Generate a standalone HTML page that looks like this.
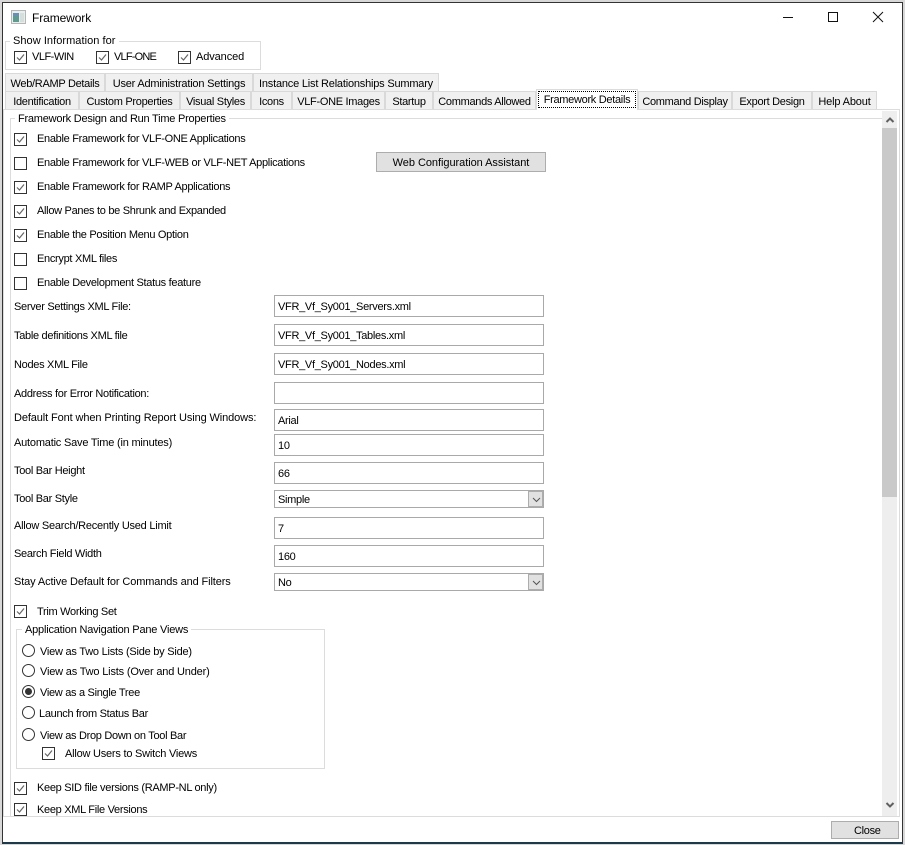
<!DOCTYPE html>
<html><head><meta charset="utf-8"><style>
*{box-sizing:border-box}
html,body{margin:0;padding:0}
body{width:905px;height:845px;position:relative;overflow:hidden;background:#d8d8d8;font:11px/14px "Liberation Sans",sans-serif;letter-spacing:-.3px;color:#000}
div,span,svg{position:absolute}
.t{white-space:nowrap;margin-top:1px}
.win{left:2px;top:2px;width:901px;height:842px;background:#fff;border:1px solid #333;border-bottom:2px solid #1c3a4a}
.tab{background:#f0f0f0;border:1px solid #d9d9d9;height:19px;text-align:center;white-space:nowrap;padding-top:3px}
.in{left:274px;width:270px;height:22px;border:1px solid #a9a9a9;background:#fff;padding:4px 0 0 3px;white-space:nowrap}
.cb{left:274px;width:270px;height:18px;border:1px solid #a9a9a9;background:#fff;padding:2px 0 0 3px;white-space:nowrap}
.arr{right:0;top:0;width:15px;height:16px;background:#e1e1e1;border:1px solid #adadad}
.line{background:#dcdcdc}
</style></head><body>
<div class="win"></div>
<svg style="left:11px;top:10px" width="16" height="15"><rect x=".5" y=".5" width="14" height="13" fill="#e8eeee" stroke="#b5b5b5"/><rect x="2" y="3" width="6" height="9" fill="#5f9a90"/><rect x="2" y="3" width="6" height="3" fill="#6a8fb0"/><rect x="9" y="3" width="4" height="9" fill="#d5dedc"/></svg>
<div class="t" style="left:32px;top:10px;font-size:12px;letter-spacing:-.1px">Framework</div>
<svg style="left:780px;top:10px" width="110" height="16" fill="none" stroke="#111"><path d="M3 7.5H13"/><rect x="48.5" y="2.5" width="9" height="9"/><path d="M93 2L103 12M103 2L93 12"/></svg>

<div style="left:5px;top:41px;width:256px;height:29px;border:1px solid #dcdcdc"></div>
<div class="t" style="left:10px;top:33px;background:#fff;padding:0 3px;letter-spacing:.05px">Show Information for</div>
<svg style="left:14px;top:51px" width="14" height="14"><use href="#ck"/></svg><div class="t" style="left:32px;top:49px;letter-spacing:-.5px">VLF-WIN</div>
<svg style="left:96px;top:51px" width="14" height="14"><use href="#ck"/></svg><div class="t" style="left:114px;top:49px;letter-spacing:-.8px">VLF-ONE</div>
<svg style="left:178px;top:51px" width="14" height="14"><use href="#ck"/></svg><div class="t" style="left:196px;top:49px;letter-spacing:-.1px">Advanced</div>

<svg width="0" height="0" style="left:0;top:0"><defs><g id="ck"><rect x=".5" y=".5" width="12" height="12" fill="#fff" stroke="#333"/><path d="M3 6.5L5.5 9L10 3.5" fill="none" stroke="#666" stroke-width="1.2"/></g><g id="un"><rect x=".5" y=".5" width="12" height="12" fill="#fff" stroke="#333"/></g><g id="ro"><circle cx="6.5" cy="6.5" r="6" fill="#fff" stroke="#333"/></g></defs></svg>

<div class="tab" style="left:5px;top:73px;width:100px">Web/RAMP Details</div>
<div class="tab" style="left:105px;top:73px;width:148px;letter-spacing:-.2px">User Administration Settings</div>
<div class="tab" style="left:253px;top:73px;width:186px;letter-spacing:-.2px">Instance List Relationships Summary</div>
<div class="tab" style="left:5px;top:91px;width:74px">Identification</div>
<div class="tab" style="left:79px;top:91px;width:101px">Custom Properties</div>
<div class="tab" style="left:180px;top:91px;width:71px">Visual Styles</div>
<div class="tab" style="left:251px;top:91px;width:41px">Icons</div>
<div class="tab" style="left:292px;top:91px;width:93px">VLF-ONE Images</div>
<div class="tab" style="left:385px;top:91px;width:48px">Startup</div>
<div class="tab" style="left:433px;top:91px;width:103px">Commands Allowed</div>
<div class="tab" style="left:638px;top:91px;width:94px">Command Display</div>
<div class="tab" style="left:732px;top:91px;width:80px">Export Design</div>
<div class="tab" style="left:812px;top:91px;width:65px;letter-spacing:-.15px">Help About</div>

<div style="left:3px;top:109px;width:897px;height:708px;border:1px solid #dcdcdc;background:#fff"></div>
<div style="left:536px;top:89px;width:102px;height:21px;background:#fff;border:1px solid #dcdcdc;border-bottom:0"></div>
<div style="left:538px;top:91px;width:98px;height:17px;border:1px dotted #000;text-align:center;padding-top:1px;white-space:nowrap">Framework Details</div>

<div class="line" style="left:10px;top:118px;width:872px;height:1px"></div>
<div class="line" style="left:10px;top:118px;width:1px;height:698px"></div>
<div class="t" style="left:15px;top:111px;background:#fff;padding:0 3px;letter-spacing:-.23px">Framework Design and Run Time Properties</div>

<svg style="left:14px;top:133px" width="14" height="14"><use href="#ck"/></svg><div class="t" style="left:37px;top:131px">Enable Framework for VLF-ONE Applications</div>
<svg style="left:14px;top:157px" width="14" height="14"><use href="#un"/></svg><div class="t" style="left:37px;top:155px">Enable Framework for VLF-WEB or VLF-NET Applications</div>
<svg style="left:14px;top:181px" width="14" height="14"><use href="#ck"/></svg><div class="t" style="left:37px;top:179px">Enable Framework for RAMP Applications</div>
<svg style="left:14px;top:205px" width="14" height="14"><use href="#ck"/></svg><div class="t" style="left:37px;top:203px">Allow Panes to be Shrunk and Expanded</div>
<svg style="left:14px;top:229px" width="14" height="14"><use href="#ck"/></svg><div class="t" style="left:37px;top:227px">Enable the Position Menu Option</div>
<svg style="left:14px;top:253px" width="14" height="14"><use href="#un"/></svg><div class="t" style="left:37px;top:251px">Encrypt XML files</div>
<svg style="left:14px;top:277px" width="14" height="14"><use href="#un"/></svg><div class="t" style="left:37px;top:275px">Enable Development Status feature</div>

<div style="left:376px;top:152px;width:170px;height:20px;background:#e1e1e1;border:1px solid #adadad;text-align:center;padding-top:3px;letter-spacing:-.05px">Web Configuration Assistant</div>

<div class="t" style="left:14px;top:299px">Server Settings XML File:</div><div class="in" style="top:295px">VFR_Vf_Sy001_Servers.xml</div>
<div class="t" style="left:14px;top:328px">Table definitions XML file</div><div class="in" style="top:324px">VFR_Vf_Sy001_Tables.xml</div>
<div class="t" style="left:14px;top:357px">Nodes XML File</div><div class="in" style="top:353px">VFR_Vf_Sy001_Nodes.xml</div>
<div class="t" style="left:14px;top:386px">Address for Error Notification:</div><div class="in" style="top:382px"></div>
<div class="t" style="left:14px;top:410px;letter-spacing:-.11px">Default Font when Printing Report Using Windows:</div><div class="in" style="top:409px">Arial</div>
<div class="t" style="left:14px;top:435px;letter-spacing:-.2px">Automatic Save Time (in minutes)</div><div class="in" style="top:434px">10</div>
<div class="t" style="left:14px;top:463px">Tool Bar Height</div><div class="in" style="top:462px">66</div>
<div class="t" style="left:14px;top:491px">Tool Bar Style</div><div class="cb" style="top:490px">Simple<div class="arr"><svg style="left:3px;top:5px" width="9" height="6" fill="none" stroke="#555"><path d="M1 1L4.500 4.500L8 1"/></svg></div></div>
<div class="t" style="left:14px;top:518px;letter-spacing:-.24px">Allow Search/Recently Used Limit</div><div class="in" style="top:517px">7</div>
<div class="t" style="left:14px;top:546px">Search Field Width</div><div class="in" style="top:545px">160</div>
<div class="t" style="left:14px;top:574px;letter-spacing:-.12px">Stay Active Default for Commands and Filters</div><div class="cb" style="top:573px">No<div class="arr"><svg style="left:3px;top:5px" width="9" height="6" fill="none" stroke="#555"><path d="M1 1L4.500 4.500L8 1"/></svg></div></div>

<svg style="left:14px;top:605px" width="14" height="14"><use href="#ck"/></svg><div class="t" style="left:37px;top:604px">Trim Working Set</div>

<div style="left:16px;top:629px;width:309px;height:140px;border:1px solid #dcdcdc"></div>
<div class="t" style="left:22px;top:622px;background:#fff;padding:0 3px;letter-spacing:-.2px">Application Navigation Pane Views</div>
<svg style="left:22px;top:644px" width="14" height="14"><use href="#ro"/></svg><div class="t" style="left:40px;top:644px;letter-spacing:-.23px">View as Two Lists (Side by Side)</div>
<svg style="left:22px;top:664px" width="14" height="14"><use href="#ro"/></svg><div class="t" style="left:40px;top:664px;letter-spacing:-.18px">View as Two Lists (Over and Under)</div>
<svg style="left:22px;top:685px" width="14" height="14"><use href="#ro"/><circle cx="6.500" cy="6.500" r="3.500" fill="#333"/></svg><div class="t" style="left:40px;top:685px">View as a Single Tree</div>
<svg style="left:22px;top:706px" width="14" height="14"><use href="#ro"/></svg><div class="t" style="left:39px;top:706px">Launch from Status Bar</div>
<svg style="left:22px;top:728px" width="14" height="14"><use href="#ro"/></svg><div class="t" style="left:40px;top:728px">View as Drop Down on Tool Bar</div>
<svg style="left:42px;top:747px" width="14" height="14"><use href="#ck"/></svg><div class="t" style="left:65px;top:746px;letter-spacing:-.22px">Allow Users to Switch Views</div>

<svg style="left:14px;top:782px" width="14" height="14"><use href="#ck"/></svg><div class="t" style="left:37px;top:780px">Keep SID file versions (RAMP-NL only)</div>
<div style="left:10px;top:800px;width:300px;height:16px;overflow:hidden"><svg style="left:4px;top:3px" width="14" height="14"><use href="#ck"/></svg><div class="t" style="left:27px;top:2px">Keep XML File Versions</div></div>

<div style="left:882px;top:111px;width:15px;height:705px;background:#eee"></div>
<div style="left:882px;top:128px;width:15px;height:369px;background:#c9c9c9"></div>
<svg style="left:882px;top:111px" width="15" height="705" fill="none" stroke="#606060" stroke-width="2"><path d="M4.500 11L8 7.500L11.500 11"/><path d="M4.500 692L8 695.500L11.500 692"/></svg>

<div style="left:831px;top:821px;width:68px;height:18px;background:#e1e1e1;border:1px solid #adadad;padding:2px 0 0 22px">Close</div>
</body></html>
